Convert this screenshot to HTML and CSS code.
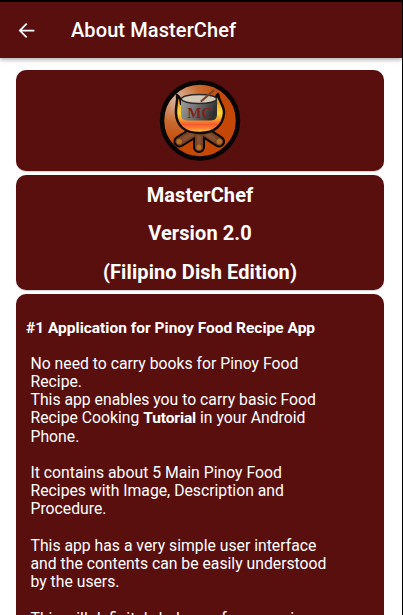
FILE: index.html
```
<!DOCTYPE html>
<html lang="en">
<head>
<meta charset="utf-8">
<title>About MasterChef</title>
<link rel="stylesheet" href="styles.css">
</head>
<body>
<div class="screen">
  <header class="app-bar">
    <svg class="back" viewBox="0 0 24 24" aria-hidden="true"><path d="M21 11H6.83l6.09-6.09L11.500 3.500l-8.500 8.500 8.500 8.500 1.410-1.410L6.830 13H21v-2z"/></svg>
    <h1 class="title">About MasterChef</h1>
  </header>
  <main class="cards">
    <section class="card logo-card">
      <svg class="logo" viewBox="0 0 100 100">
        <defs>
          <radialGradient id="disc" cx="0.2" cy="0.22" r="0.6">
            <stop offset="0" stop-color="#d9b8a6"/><stop offset="0.5" stop-color="#c96c32"/><stop offset="1" stop-color="#c44705"/>
          </radialGradient>
          <linearGradient id="flame" x1="0" y1="0" x2="0" y2="1">
            <stop offset="0" stop-color="#e08a20"/><stop offset="0.5" stop-color="#ffd735"/><stop offset="0.68" stop-color="#f8902c"/><stop offset="0.78" stop-color="#f65a30"/><stop offset="0.88" stop-color="#ff8030"/><stop offset="1" stop-color="#ffe05a"/>
          </linearGradient>
          <linearGradient id="pot" x1="0" y1="0" x2="1" y2="0.3">
            <stop offset="0" stop-color="#a0a0a0"/><stop offset="0.45" stop-color="#777"/><stop offset="1" stop-color="#303030"/>
          </linearGradient>
        </defs>
        <circle cx="50" cy="48.500" r="38" fill="url(#disc)" stroke="#080504" stroke-width="4.500"/>
        <g fill="none" stroke-linecap="round" stroke-linejoin="round">
          <path d="M44 60.500L29.500 69.500M49 61V75M55 60.500L69 69.500" stroke="#080504" stroke-width="12"/>
          <path d="M44 60.500L29.500 69.500M49 61V75M55 60.500L69 69.500" stroke="#77421f" stroke-width="8"/>
          <path d="M42 62L34 67M49 65V71M57 62L64 67" stroke="#865031" stroke-width="4"/>
          <path d="M29 69.500h.5M49 75v.5M69 69.500h.5" stroke="#b86e27" stroke-width="5"/>
        </g>
        <path d="M27 23C28 29 25.500 34 26 41C26.500 54 35 61 50 61S73 53 74 41C74.500 34 69 30 68 22C65 25 65.500 29 66 32H31C31 29 30 25 27 23Z" fill="url(#flame)" stroke="#120b05" stroke-width="2.500" stroke-linejoin="round"/>
        <path d="M31 27V43Q31 48 37 48.500H61Q67 48 67 43V27Z" fill="url(#pot)"/>
        <ellipse cx="49" cy="27" rx="17.500" ry="4.500" fill="#d5c8b7" stroke="#292929" stroke-width="1.500"/>
        <path d="M51.500 29L63.500 18.500" stroke="#74432d" stroke-width="2.200" stroke-linecap="round"/>
        <text class="monogram" x="49.800" y="46" text-anchor="middle">MC</text>
      </svg>
    </section>
    <section class="card version-card">
      <p>MasterChef</p>
      <p>Version 2.0</p>
      <p>(Filipino Dish Edition)</p>
    </section>
    <section class="card about-card">
      <h2>#1 Application for Pinoy Food Recipe App</h2>
      <p>No need to carry books for Pinoy Food<br>Recipe.<br>This app enables you to carry basic Food<br>Recipe Cooking <b>Tutorial</b> in your Android<br>Phone.</p>
      <p>It contains about 5 Main Pinoy Food<br>Recipes with Image, Description and<br>Procedure.</p>
      <p>This app has a very simple user interface<br>and the contents can be easily understood<br>by the users.</p>
      <p>This will definitely help you for preparing</p>
    </section>
  </main>
</div>
</body>
</html>
```
FILE: styles.css
```
* { box-sizing: border-box; }
body { margin: 0; overflow: hidden; background: #fff; font-family: Roboto, sans-serif; color: #fff; }
h1, h2, p { margin: 0; }
.screen { height: 615px; overflow: hidden; border-top: 2px solid #000; border-right: 1px solid #000; }
.app-bar { height: 56px; display: flex; align-items: center; background: #590f0e; padding-left: 16px; box-shadow: 0 2px 4px rgba(0,0,0,.3); }
.back { width: 21px; height: 21px; fill: #fff; margin-right: 34px; }
.title { font-size: 20px; font-weight: 500; line-height: 24px; letter-spacing: .1px; }
.cards { display: flex; flex-direction: column; gap: 4px; padding: 12px 18px 0 16px; }
.card { flex: none; background: #590f0e; border-radius: 10px; box-shadow: 0 1px 1px rgba(0,0,0,.18); }
.logo-card { height: 101px; display: flex; justify-content: center; }
.logo { width: 100px; height: 100px; margin-top: 2px; }
.monogram { font: bold 15px "Liberation Serif", serif; fill: #7e231c; }
.version-card { height: 115px; padding-top: 1px; text-align: center; font-size: 20px; font-weight: 700; line-height: 38.4px; letter-spacing: .1px; }
.about-card { height: 360px; padding: 25px 10px 0; font-size: 15.75px; line-height: 18.2px; white-space: nowrap; }
.about-card h2 { font-size: 15.5px; font-weight: 700; line-height: 18px; margin-bottom: 17.8px; }
.about-card p { padding-left: 4.5px; margin-bottom: 18.2px; }
.about-card b { font-size: 15.5px; letter-spacing: -.1px; }
```
